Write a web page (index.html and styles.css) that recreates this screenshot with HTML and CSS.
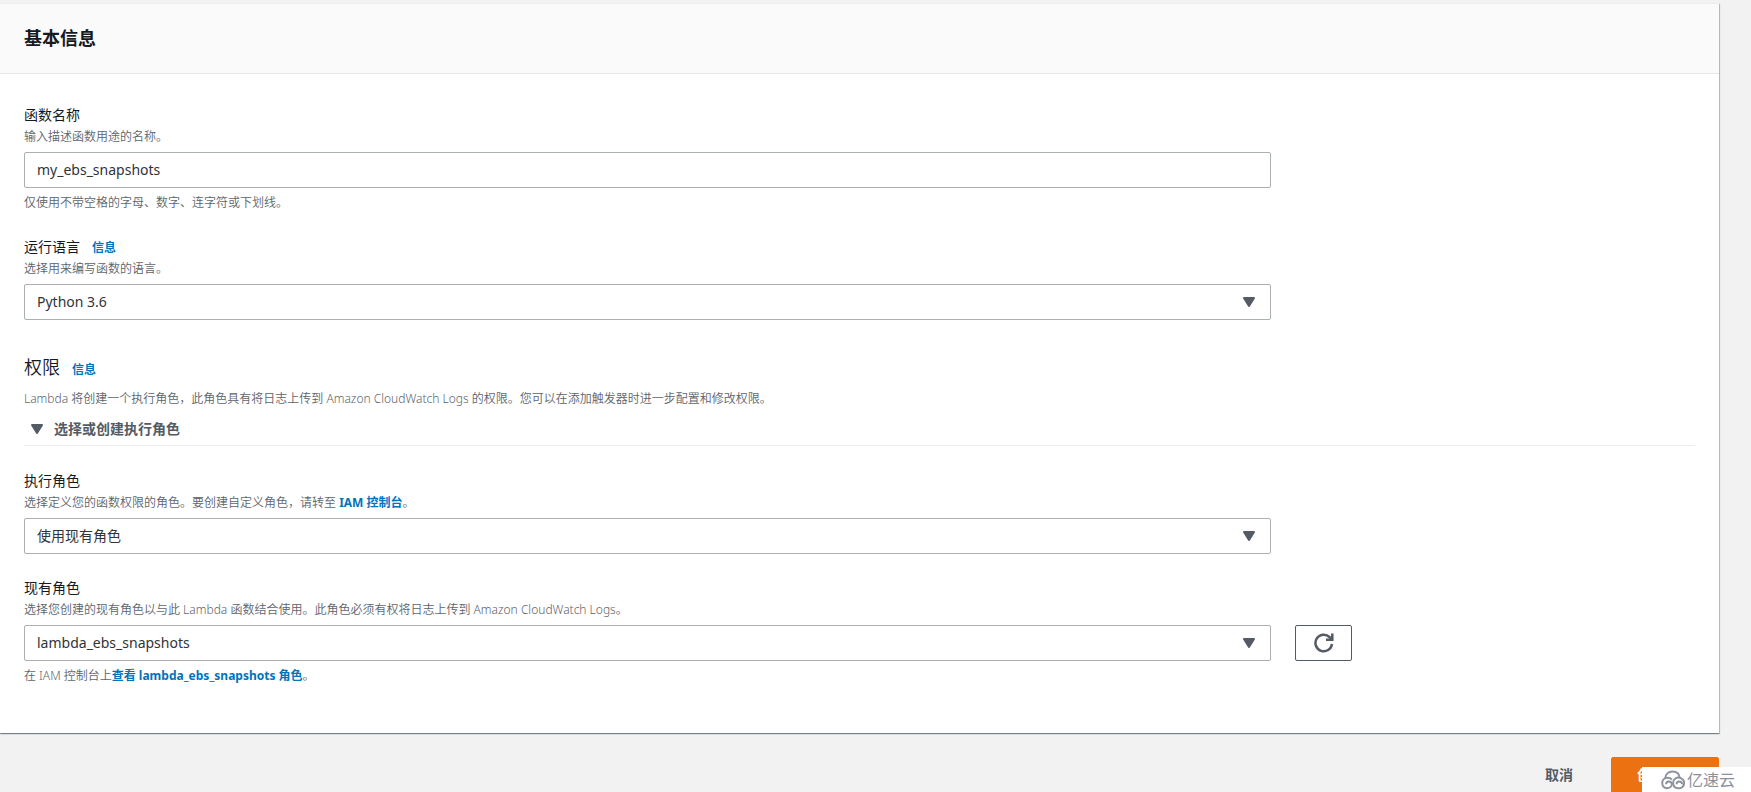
FILE: index.html
```
<!DOCTYPE html>
<html lang="zh-CN">
<head>
<meta charset="utf-8">
<title>基本信息</title>
<link rel="stylesheet" href="styles.css">
</head>
<body>
<main class="page">
  <form class="form">
    <section class="panel">
      <header class="panel-header"><h2 class="panel-title">基本信息</h2></header>
      <div class="panel-body">
        <div class="field">
          <label class="label" for="fn-name">函数名称</label>
          <p class="description">输入描述函数用途的名称。</p>
          <div class="control-row"><div class="control"><input class="input" id="fn-name" type="text" value="my_ebs_snapshots"></div></div>
          <p class="hint">仅使用不带空格的字母、数字、连字符或下划线。</p>
        </div>
        <div class="field">
          <div class="label-row"><label for="runtime">运行语言</label><a class="link" href="#">信息</a></div>
          <p class="description">选择用来编写函数的语言。</p>
          <div class="control-row"><div class="control">
            <select class="input" id="runtime"><option>Python 3.6</option></select>
            <svg class="caret" viewBox="0 0 12 10"><path d="M1 1h10L6 9z"/></svg>
          </div></div>
        </div>
        <div class="permissions">
          <div class="label-row"><h3 class="section-title">权限</h3><a class="link" href="#">信息</a></div>
          <p class="section-text">Lambda 将创建一个执行角色，此角色具有将日志上传到 Amazon CloudWatch Logs 的权限。您可以在添加触发器时进一步配置和修改权限。</p>
          <button class="expander" type="button" aria-expanded="true">
            <svg class="expander-icon" viewBox="0 0 12 10"><path d="M1 1h10L6 9z"/></svg>选择或创建执行角色
          </button>
        </div>
        <div class="field">
          <label class="label" for="role-type">执行角色</label>
          <p class="description">选择定义您的函数权限的角色。要创建自定义角色，请转至 <a class="link" href="#">IAM 控制台</a>。</p>
          <div class="control-row"><div class="control">
            <select class="input" id="role-type"><option>使用现有角色</option></select>
            <svg class="caret" viewBox="0 0 12 10"><path d="M1 1h10L6 9z"/></svg>
          </div></div>
        </div>
        <div class="field">
          <label class="label" for="role">现有角色</label>
          <p class="description">选择您创建的现有角色以与此 Lambda 函数结合使用。此角色必须有权将日志上传到 Amazon CloudWatch Logs。</p>
          <div class="control-row">
            <div class="control">
              <select class="input" id="role"><option>lambda_ebs_snapshots</option></select>
              <svg class="caret" viewBox="0 0 12 10"><path d="M1 1h10L6 9z"/></svg>
            </div>
            <button class="refresh" type="button" aria-label="刷新">
              <svg class="refresh-icon" viewBox="0 0 20 20"><path d="M18 11a8.300 8.300 0 1 1-2.500-7L18 6.200"/><path d="M18.300 0.500v6.300H12"/></svg>
            </button>
          </div>
          <p class="hint">在 IAM 控制台上<a class="link" href="#">查看 lambda_ebs_snapshots 角色</a>。</p>
        </div>
      </div>
    </section>
    <div class="actions">
      <button class="button" type="button">取消</button>
      <button class="button button-primary" type="button">创建函数</button>
    </div>
  </form>
</main>
<div class="watermark">
  <svg class="watermark-icon" viewBox="0 0 26 20"><path d="M5.500 8C5.500 4 8.800 1.200 13 1.200s7 2.600 7.500 6.300"/><path d="M12.500 9.500C10.500 7.800 9 7.500 7 7.800a5.400 5.400 0 0 0 0 10.700c3 0 5.300-1.800 5.300-4 0-2-1.500-3-3.200-3s-2.800 1.300-2.800 3"/><path d="M23 9c-2-1.700-5-2-7-.5s-2.500 3-2.300 5c.2 3 2.300 5 5.300 5a5.200 5.200 0 0 0 1.500-10.700M23 14.500c0-2-1.300-3-3-3s-2.800 1.300-2.800 3"/></svg>
  <span>亿速云</span>
</div>
</body>
</html>
```
FILE: styles.css
```
* { box-sizing: border-box; }
body {
  margin: 0;
  background: #f2f2f2;
  color: #16191f;
  font: 14px/20px "Noto Sans", "Noto Sans CJK SC", sans-serif;
  overflow: hidden;
}
h2, h3, p { margin: 0; }
.page { padding: 3px 32px 0 0; }
.panel {
  background: #fff;
  box-shadow: 0 1px 1px 0 rgba(0, 28, 36, .4), 1px 1px 1px 0 rgba(0, 28, 36, .2);
}
.panel-header {
  padding: 23px 24px 24px;
  background: #fafafa;
  border-top: 1px solid #eaeded;
  border-bottom: 1px solid #e6e8e8;
}
.panel-title { font-size: 18px; line-height: 22px; font-weight: 700; }
.panel-body { padding: 31px 24px 47px; }
.field { margin-bottom: 24px; }
.field:last-child { margin-bottom: 0; }
.label { display: block; margin-bottom: 2px; }
.label-row { display: flex; align-items: baseline; gap: 12px; }
.field .label-row { margin-bottom: 1px; }
.label-row .link { font-size: 12px; }
.link { color: #0073bb; font-weight: 700; text-decoration: none; }
.description, .hint, .section-text { font-size: 12px; color: #5c646c; font-weight: 350; }
.description { margin-bottom: 5px; }
.hint { margin-top: 5px; }
.control-row { display: flex; gap: 24px; }
.control { position: relative; flex: 0 0 calc(75% - 6px); }
.input {
  display: block;
  width: 100%;
  height: 36px;
  padding: 0 12px 1px;
  border: 1px solid #aab0b0;
  border-radius: 2px;
  background: #fff;
  color: #303338;
  font: inherit;
  appearance: none;
}
.caret {
  position: absolute;
  top: 13px;
  right: 16px;
  width: 12px;
  height: 10px;
  pointer-events: none;
}
.caret, .expander-icon {
  fill: #545b64;
  stroke: #545b64;
  stroke-width: 2;
  stroke-linejoin: round;
}
.permissions { margin: 35px 0 25px; }
.section-title { font-size: 18px; line-height: 24px; font-weight: 350; }
.section-text { margin: 9px 0 5px; }
.expander {
  display: flex;
  align-items: center;
  gap: 11px;
  width: 100%;
  padding: 5px 7px 6px;
  border: 0;
  border-bottom: 1px solid #eaeded;
  background: none;
  color: #545b64;
  font: inherit;
  font-weight: 700;
}
.expander-icon { width: 12px; height: 10px; }
.refresh {
  display: flex;
  align-items: center;
  justify-content: center;
  width: 57px;
  height: 36px;
  padding: 0;
  border: 1px solid #545b64;
  border-radius: 2px;
  background: #fff;
}
.refresh-icon { width: 20px; height: 20px; fill: none; stroke: #545b64; stroke-width: 2.5; }
.actions { display: flex; justify-content: flex-end; gap: 12px; padding-top: 24px; }
.button {
  height: 36px;
  padding: 0 25px;
  border: 1px solid transparent;
  border-radius: 2px;
  background: none;
  color: #545b64;
  font: inherit;
  font-weight: 700;
}
.button-primary { background: #ec7211; border-color: #ec7211; color: #fff; }
.watermark {
  position: fixed;
  right: 0;
  bottom: 0;
  display: flex;
  align-items: center;
  gap: 2px;
  height: 25px;
  padding: 0 16px 0 18px;
  background: #fff;
  color: #8c919b;
  font-size: 16px;
}
.watermark-icon { width: 25px; height: 20px; fill: none; stroke: #8c919b; stroke-width: 2; }
```
